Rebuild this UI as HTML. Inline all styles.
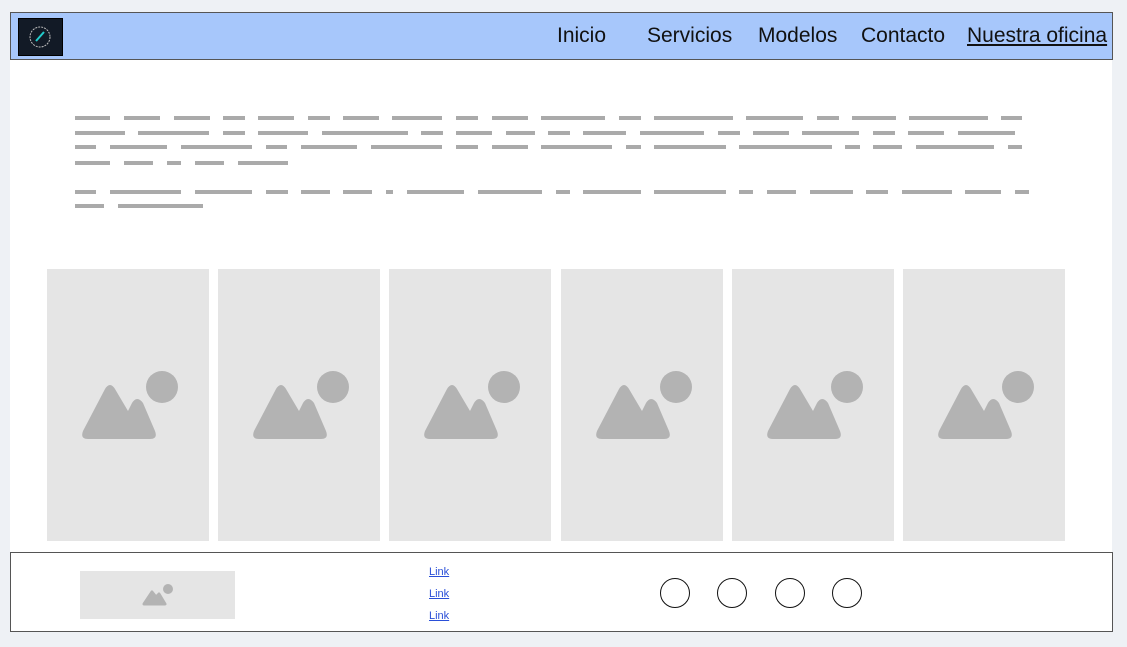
<!DOCTYPE html>
<html><head><meta charset="utf-8"><style>
body{margin:0;width:1127px;height:647px;background:#eef1f5;position:relative;overflow:hidden;font-family:"Liberation Sans",Arial,sans-serif}
.main{position:absolute;left:10px;top:12px;width:1102px;height:620px;background:#fff}
.hdr{position:absolute;left:10px;top:12px;width:1101px;height:46px;background:#a7c7fb;border:1px solid #555}
.logo{position:absolute;left:18px;top:18px;width:43px;height:36px;background:#121a26;border:1px solid #000}
.nav{position:absolute;top:24px;font-size:21px;color:#111;line-height:24px}
.bar{position:absolute;height:4px;background:#aaa}
.img{position:absolute;top:269px;width:162px;height:272px;background:#e5e5e5}
.ftr{position:absolute;left:10px;top:552px;width:1101px;height:78px;background:#fff;border:1px solid #555}
.lk{position:absolute;left:429px;font-size:11px;color:#2a4fd8;text-decoration:underline}
.c{position:absolute;top:578px;width:28px;height:28px;border:1px solid #111;border-radius:50%}
</style></head><body>
<div class="main"></div>
<div class="hdr"></div>
<div class="logo"><svg width="43" height="36"><circle cx="21" cy="18" r="10" fill="none" stroke="#bbb" stroke-width="1" stroke-dasharray="2 1"/><path d="M17 22 L25 13" stroke="#2cc" stroke-width="2"/></svg></div>
<div class="nav" style="left:557px">Inicio</div>
<div class="nav" style="left:647px">Servicios</div>
<div class="nav" style="left:758px">Modelos</div>
<div class="nav" style="left:861px">Contacto</div>
<div class="nav" style="left:967px;text-decoration:underline">Nuestra oficina</div>
<div id="bars"></div>
<div class="ftr"></div>
<div style="position:absolute;left:80px;top:571px;width:155px;height:48px;background:#e5e5e5"><svg width="155" height="48"><circle cx="88" cy="18" r="5" fill="#b3b3b3"/><path d="M64 33 L72 21 L76 26 L79 23 L85 33 Z" fill="#b3b3b3" stroke="#b3b3b3" stroke-width="3" stroke-linejoin="round"/></svg></div>
<div class="lk" style="top:566px">Link</div>
<div class="lk" style="top:588px">Link</div>
<div class="lk" style="top:610px">Link</div>
<div class="c" style="left:660px"></div><div class="c" style="left:717px"></div><div class="c" style="left:775px"></div><div class="c" style="left:832px"></div>
<script>
var L=[[116,"75-110,124-160,174-210,223-245,258-294,308-330,343-379,392-442,456-478,492-528,541-605,619-641,654-733,746-803,817-839,852-896,909-988,1001-1022"],
[131,"75-125,138-209,223-245,258-308,322-408,421-443,456-492,506-535,548-570,583-626,640-704,718-740,753-789,802-859,873-895,908-944,958-1015"],
[145,"75-96,110-167,181-252,266-287,301-357,371-442,456-478,492-528,541-612,626-641,654-726,739-832,845-860,873-902,916-994,1008-1022"],
[161,"75-110,124-153,167-181,195-224,238-288"],
[190,"75-96,110-181,195-252,266-288,301-330,343-372,386-393,407-464,478-542,556-570,583-641,654-726,739-753,767-796,810-853,866-888,902-952,965-1001,1015-1029"],
[204,"75-104,118-203"]];
var h="";L.forEach(function(l){l[1].split(",").forEach(function(s){var p=s.split("-");h+='<div class="bar" style="top:'+l[0]+'px;left:'+p[0]+'px;width:'+(p[1]-p[0])+'px"></div>';});});
[47,218,389,561,732,903].forEach(function(x){h+='<div class="img" style="left:'+x+'px"><svg width="162" height="272"><circle cx="115" cy="118" r="16" fill="#b3b3b3"/><path d="M36 162 Q33 170 41 170 L103 170 Q111 170 108 162 L96 134 Q90 126 85 134 L81 142 L68 120 Q63 112 58 120 Z" fill="#b3b3b3"/></svg></div>';});
document.getElementById("bars").innerHTML=h;
</script>
</body></html>
